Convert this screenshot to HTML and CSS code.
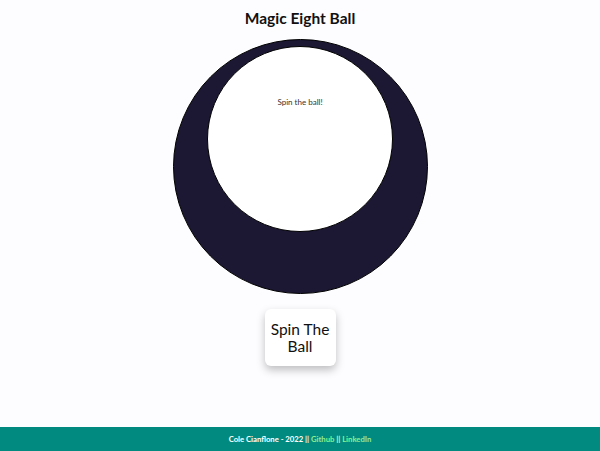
FILE: index.html
```html
<!DOCTYPE html>
<html lang="en">
<head>
<meta charset="utf-8">
<title>Magic Eight Ball</title>
<link rel="stylesheet" href="styles.css">
</head>
<body>
<div class="page">
  <main class="main">
    <h1 class="title">Magic Eight Ball</h1>
    <div class="ball">
      <div class="window">
        <p class="answer">Spin the ball!</p>
      </div>
    </div>
    <button class="spin">Spin The Ball</button>
  </main>
  <footer class="footer">
    <span>Cole Cianflone - 2022 || </span><a class="link" href="#">Github</a><span class="sep"> || </span><a class="link" href="#">LinkedIn</a>
  </footer>
</div>
</body>
</html>
```
FILE: styles.css
```css
* { box-sizing: border-box; }
html, body { margin: 0; padding: 0; }
body {
  background: #fdfcfe;
  font-family: "Lato", "Open Sans", sans-serif;
  color: #111;
}
.page {
  min-height: 451px;
  display: flex;
  flex-direction: column;
}
.main {
  flex: 1;
  display: flex;
  flex-direction: column;
  align-items: center;
}
.title {
  margin: 8px 0 0;
  font-size: 15.5px;
  line-height: 20px;
  font-weight: 700;
  height: 31px;
}
.ball {
  width: 255px;
  height: 255px;
  border-radius: 50%;
  border: 1px solid #000;
  background: #1c1834;
  display: flex;
  justify-content: center;
  padding-top: 6px;
}
.window {
  width: 186px;
  height: 186px;
  border-radius: 50%;
  border: 1px solid #000;
  background: #fff;
  display: flex;
  justify-content: center;
}
.answer {
  margin: 50px 0 0;
  font-size: 8px;
  color: #333;
}
.spin {
  margin-top: 15px;
  width: 71px;
  height: 57px;
  border: none;
  border-radius: 6px;
  background: #fff;
  box-shadow: 0 4px 8px rgba(0,0,0,0.25);
  font-family: inherit;
  font-size: 15.5px;
  line-height: 17px;
  color: #111;
  padding: 0 4px;
}
.footer {
  height: 24px;
  background: #008a80;
  color: #fff;
  font-size: 7.7px;
  font-weight: 700;
  display: flex;
  align-items: center;
  justify-content: center;
  white-space: pre;
}
.link { color: #90ee90; text-decoration: none; }
.sep { color: #f0f0c0; }
```
